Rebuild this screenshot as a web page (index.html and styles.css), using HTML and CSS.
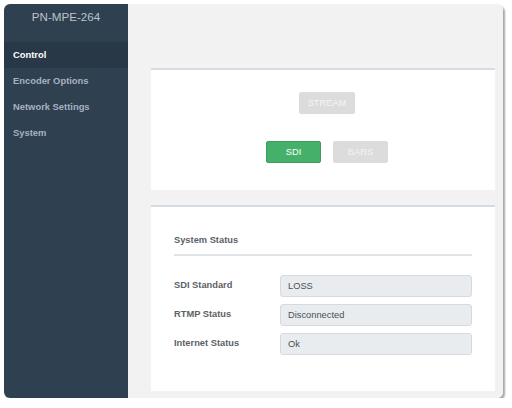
FILE: index.html
```html
<!DOCTYPE html>
<html>
<head>
<meta charset="utf-8">
<link rel="stylesheet" href="styles.css">
</head>
<body>
<div class="window">
  <aside class="sidebar">
    <div class="brand">PN-MPE-264</div>
    <nav class="nav">
      <div class="nav-item active">Control</div>
      <div class="nav-item">Encoder Options</div>
      <div class="nav-item">Network Settings</div>
      <div class="nav-item">System</div>
    </nav>
  </aside>
  <main class="main">
    <section class="card card-controls">
      <div class="btn-row"><button class="btn btn-grey btn-stream">STREAM</button></div>
      <div class="btn-row row-2">
        <button class="btn btn-green">SDI</button>
        <button class="btn btn-grey">BARS</button>
      </div>
    </section>
    <section class="card card-status">
      <h2 class="status-title">System Status</h2>
      <div class="status-rows">
        <div class="status-row"><span class="label">SDI Standard</span><div class="field">LOSS</div></div>
        <div class="status-row"><span class="label">RTMP Status</span><div class="field">Disconnected</div></div>
        <div class="status-row"><span class="label">Internet Status</span><div class="field">Ok</div></div>
      </div>
    </section>
  </main>
</div>
</body>
</html>
```

FILE: styles.css
```css
html, body {
  margin: 0;
  padding: 0;
  background: #ffffff;
  font-family: "Liberation Sans", Arial, sans-serif;
}
.window {
  margin: 4px 0 0 4px;
  width: 499px;
  height: 394px;
  display: flex;
  border-radius: 6px;
  overflow: hidden;
  box-shadow: 2px 2px 2px rgba(0, 0, 0, 0.35);
}
.sidebar {
  width: 124px;
  flex: none;
  background: #2f4050;
}
.brand {
  height: 38px;
  box-sizing: border-box;
  padding-top: 5px;
  line-height: 16px;
  font-size: 11.6px;
  color: #bcc4cc;
  text-align: center;
}
.nav-item {
  height: 26px;
  line-height: 26px;
  padding-left: 9px;
  font-size: 9.4px;
  font-weight: bold;
  color: #a7b1c2;
}
.nav-item.active {
  background: #293846;
  color: #ffffff;
}
.main {
  flex: 1;
  background: #f2f2f3;
  box-sizing: border-box;
  padding: 64px 8px 0 23px;
  display: flex;
  flex-direction: column;
  gap: 15px;
}
.card {
  background: #ffffff;
  border-top: 2px solid #d6dce4;
}
.card-controls {
  box-sizing: content-box;
  padding: 22px 0 0 8px;
  height: 98px;
}
.btn-row {
  display: flex;
  justify-content: center;
  gap: 12px;
}
.row-2 {
  margin-top: 27px;
}
.btn {
  width: 55px;
  height: 22px;
  border-radius: 2px;
  font-family: "Liberation Sans", Arial, sans-serif;
  font-size: 9.3px;
  padding: 0;
  border: 1px solid #dcdcdc;
  color: #f4f4f4;
  background: #dcdcdc;
}
.btn-stream {
  width: 56px;
}
.btn-green {
  background: #45b06a;
  border-color: #3c9e5f;
  color: #ffffff;
}
.card-status {
  height: 186px;
  box-sizing: border-box;
  padding: 26px 23px 0 23px;
}
.status-title {
  margin: 0;
  font-size: 9.3px;
  line-height: 14px;
  font-weight: bold;
  color: #5d6165;
  padding-bottom: 7px;
  border-bottom: 2px solid #e0e4e9;
}
.status-rows {
  margin-top: 19px;
  display: flex;
  flex-direction: column;
  gap: 7px;
}
.status-row {
  display: flex;
  align-items: center;
}
.label {
  width: 106px;
  flex: none;
  font-size: 9.3px;
  font-weight: bold;
  color: #5d6165;
  position: relative;
  top: -1px;
}
.field {
  flex: 1;
  height: 22px;
  box-sizing: border-box;
  border: 1px solid #d6dade;
  border-radius: 3px;
  background: #e9ecef;
  padding-left: 7px;
  line-height: 20px;
  font-size: 9.3px;
  color: #4b4f53;
}
```
